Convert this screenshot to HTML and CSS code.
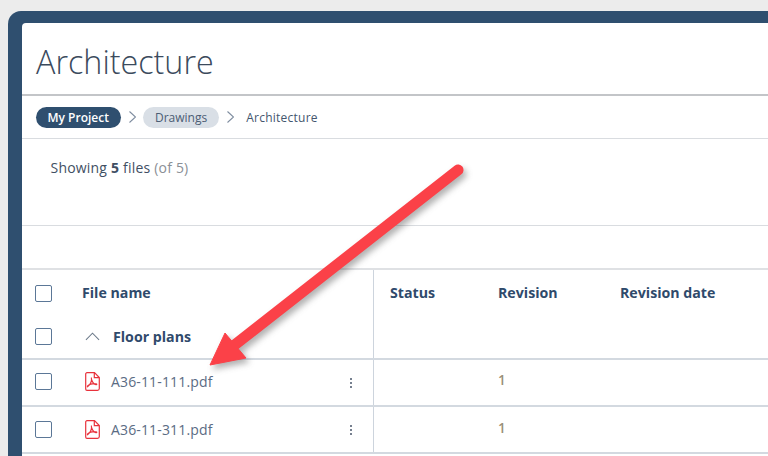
FILE: index.html
```html
<!DOCTYPE html>
<html lang="en">
<head>
<meta charset="utf-8">
<title>Architecture</title>
<link rel="stylesheet" href="styles.css">
</head>
<body>
<svg width="0" height="0" class="defs" aria-hidden="true">
  <symbol id="pdf" viewBox="0 0 15 19">
    <path d="M2 .7h7.500l4.800 4.800v11a1.800 1.800 0 0 1-1.800 1.800H2A1.300 1.300 0 0 1 .7 17V2A1.300 1.300 0 0 1 2 .7z M9.300.9v4.800h5" fill="none" stroke="currentColor" stroke-width="1.200"/>
    <path d="M6.400 5.500c.5 3.300-1 7.200-3.900 9.300-.6-.7 1-2 3.300-2.700 1.800-.5 3.700-.7 5.400-.3 1 .3.800 1.100-.2.900C8.900 12.300 7.200 9.600 6.400 7z" fill="none" stroke="currentColor" stroke-width="1.100"/>
  </symbol>
</svg>
<div class="frame">
  <main class="panel">
    <h1 class="title">Architecture</h1>
    <nav class="crumbs">
      <span class="pill pill-dark">My Project</span>
      <svg class="sep" viewBox="0 0 7 12"><path d="M.5 .5l6 5.500-6 5.500"/></svg>
      <span class="pill pill-light">Drawings</span>
      <svg class="sep" viewBox="0 0 7 12"><path d="M.5 .5l6 5.500-6 5.500"/></svg>
      <span class="crumb-text">Architecture</span>
    </nav>
    <section class="summary">Showing <b>5</b> files <span class="muted">(of 5)</span></section>
    <div class="toolbar"></div>
    <section class="table">
      <div class="row head">
        <div class="left">
          <div class="sub sub-a"><span class="check"></span><span class="col-name">File name</span></div>
          <div class="sub sub-b"><span class="check"></span>
            <svg class="caret" viewBox="0 0 16 9"><path d="M1 8l7-7 7 7"/></svg>
            <span class="group">Floor plans</span></div>
        </div>
        <div class="right head-right">
          <span class="c-status">Status</span><span class="c-rev">Revision</span><span class="c-date">Revision date</span>
        </div>
      </div>
      <div class="row file">
        <div class="left"><span class="check"></span><svg class="pdf"><use href="#pdf"/></svg><span class="fname">A36-11-111.pdf</span><span class="more"><i></i><i></i><i></i></span></div>
        <div class="right"><span class="c-status"></span><span class="c-rev rev">1</span></div>
      </div>
      <div class="row file">
        <div class="left"><span class="check"></span><svg class="pdf"><use href="#pdf"/></svg><span class="fname">A36-11-311.pdf</span><span class="more"><i></i><i></i><i></i></span></div>
        <div class="right"><span class="c-status"></span><span class="c-rev rev">1</span></div>
      </div>
    </section>
  </main>
</div>
<svg class="arrow" viewBox="0 0 768 456" aria-hidden="true">
  <path class="shaft" d="M458 170L232 347"/>
  <path class="head" d="M210 365L225 333L246 358Z"/>
</svg>
</body>
</html>
```
FILE: styles.css
```css
* { box-sizing: border-box; }
html, body { margin: 0; height: 456px; overflow: hidden; }
body {
  background: #ececec;
  padding: 11px 0 0 8px;
  font-family: "Open Sans", sans-serif;
  color: #2f4a6b;
  position: relative;
}
.defs { position: absolute; }
.frame {
  width: 760px;
  height: 445px;
  overflow: hidden;
  background: #2f4f6f;
  border-radius: 13px 0 0 0;
  padding: 12px 0 0 13.500px;
}
.panel { background: #fff; height: 100%; border-radius: 4px 0 0 0; }
.title {
  margin: 0;
  height: 73px;
  border-bottom: 2px solid #c3c5c8;
  padding: 16px 0 0 14.500px;
  font-weight: 300;
  font-size: 32.300px;
  line-height: 44px;
  color: #3b4a5c;
}
.crumbs {
  height: 43px;
  border-bottom: 1px solid #d9dce0;
  display: flex;
  align-items: center;
  padding: 1px 0 0 14px;
  font-size: 12px;
}
.pill { height: 21px; line-height: 21px; border-radius: 11px; padding: 0 12px; }
.pill-dark { background: #2f4f6f; color: #fff; font-weight: 600; }
.pill-light { background: #d9dfe6; color: #4b5d74; }
.sep { width: 7px; height: 12px; margin: -2px 7px 0 8px; fill: none; stroke: #7f8da0; stroke-width: 1.100; }
.crumb-text { margin-left: 5px; color: #44566e; letter-spacing: .25px; }
.summary {
  height: 87px;
  border-bottom: 1px solid #d9dce0;
  padding: 19px 0 0 29px;
  font-size: 14px;
  letter-spacing: .2px;
  line-height: 20px;
  color: #3f4f63;
}
.muted { color: #8b8f96; }
.toolbar { height: 44px; border-bottom: 2px solid #dfe1e4; }
.row { display: flex; border-bottom: 2px solid #d3d9e0; }
.left { width: 352.500px; flex: none; border-right: 1px solid #cdd4dd; position: relative; }
.right { flex: 1; display: flex; padding-left: 16px; }
.head { height: 90px; }
.sub { display: flex; align-items: center; padding-left: 13px; }
.sub-a { height: 46px; }
.sub-b { height: 41px; }
.check {
  width: 17px; height: 17px; flex: none;
  border: 1.500px solid #5b7797;
  border-radius: 2px;
}
.col-name { margin: -2px 0 0 30.500px; font-weight: 700; font-size: 14.200px; }
.caret { width: 15px; height: 9px; margin-left: 33.500px; fill: none; stroke: #6c7a8a; stroke-width: 1.100; }
.group { margin-left: 13px; font-weight: 700; font-size: 14.200px; }
.head-right { padding-top: 13px; font-weight: 700; font-size: 14.200px; line-height: 20px; }
.c-status { width: 108px; flex: none; }
.c-rev { width: 122px; flex: none; }
.file { height: 47px; }
.file .left { display: flex; align-items: center; padding: 0 0 2px 13px; }
.file .right { align-items: center; padding-bottom: 5px; }
.file + .file .left { padding-bottom: 0; }
.file + .file .right { padding-bottom: 3px; }
.pdf { width: 15px; height: 19px; margin-left: 33.500px; color: #e8323c; flex: none; }
.fname { margin-left: 11px; font-size: 14px; color: #5a6b83; letter-spacing: .15px; }
.more { position: absolute; left: 328px; top: 18px; display: flex; flex-direction: column; gap: 2px; }
.more i { width: 2px; height: 2px; border-radius: 50%; background: #49566a; }
.rev { font-size: 13.500px; color: #9a8f78; font-weight: 600; }
.arrow { position: absolute; left: 0; top: 0; width: 768px; height: 456px; filter: drop-shadow(3px 4px 3px rgba(60,60,60,.4)); }
.shaft { stroke: #fb4148; stroke-width: 11; stroke-linecap: round; fill: none; }
.head { fill: #fb4148; stroke: #fb4148; stroke-width: 1; }
```
